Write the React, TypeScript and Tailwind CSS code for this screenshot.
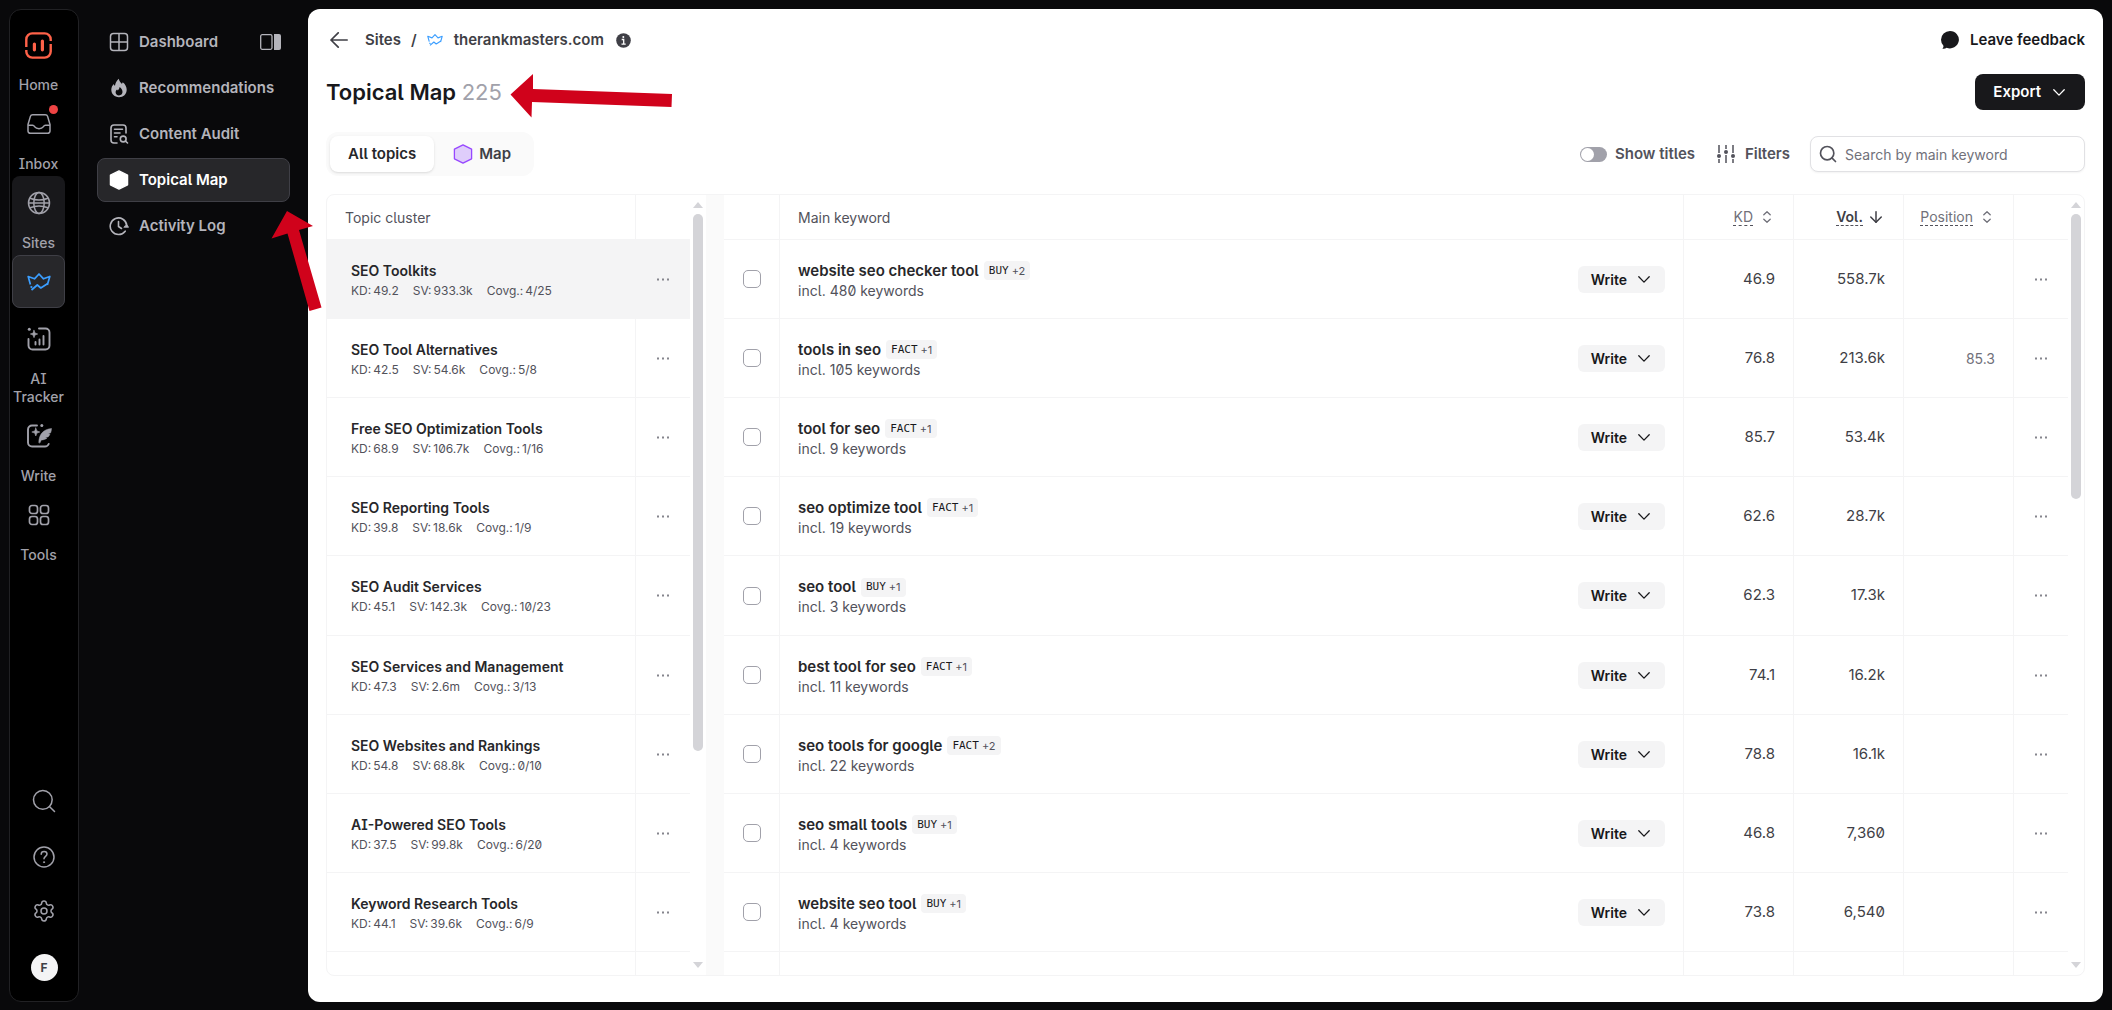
import type { ReactNode } from 'react';
import clsx from 'clsx';
import { ArrowDown, Search, Settings } from 'lucide-react';

interface Cluster {
  name: string;
  kd: string;
  sv: string;
  covg: string;
}

interface Keyword {
  name: string;
  tag: string;
  more: string;
  count: number;
  kd: string;
  vol: string;
  position?: string;
}

const clusters: Cluster[] = [
  { name: 'SEO Toolkits', kd: '49.2', sv: '933.3k', covg: '4/25' },
  { name: 'SEO Tool Alternatives', kd: '42.5', sv: '54.6k', covg: '5/8' },
  { name: 'Free SEO Optimization Tools', kd: '68.9', sv: '106.7k', covg: '1/16' },
  { name: 'SEO Reporting Tools', kd: '39.8', sv: '18.6k', covg: '1/9' },
  { name: 'SEO Audit Services', kd: '45.1', sv: '142.3k', covg: '10/23' },
  { name: 'SEO Services and Management', kd: '47.3', sv: '2.6m', covg: '3/13' },
  { name: 'SEO Websites and Rankings', kd: '54.8', sv: '68.8k', covg: '0/10' },
  { name: 'AI-Powered SEO Tools', kd: '37.5', sv: '99.8k', covg: '6/20' },
  { name: 'Keyword Research Tools', kd: '44.1', sv: '39.6k', covg: '6/9' },
];

const keywords: Keyword[] = [
  { name: 'website seo checker tool', tag: 'BUY', more: '+2', count: 480, kd: '46.9', vol: '558.7k' },
  { name: 'tools in seo', tag: 'FACT', more: '+1', count: 105, kd: '76.8', vol: '213.6k', position: '85.3' },
  { name: 'tool for seo', tag: 'FACT', more: '+1', count: 9, kd: '85.7', vol: '53.4k' },
  { name: 'seo optimize tool', tag: 'FACT', more: '+1', count: 19, kd: '62.6', vol: '28.7k' },
  { name: 'seo tool', tag: 'BUY', more: '+1', count: 3, kd: '62.3', vol: '17.3k' },
  { name: 'best tool for seo', tag: 'FACT', more: '+1', count: 11, kd: '74.1', vol: '16.2k' },
  { name: 'seo tools for google', tag: 'FACT', more: '+2', count: 22, kd: '78.8', vol: '16.1k' },
  { name: 'seo small tools', tag: 'BUY', more: '+1', count: 4, kd: '46.8', vol: '7,360' },
  { name: 'website seo tool', tag: 'BUY', more: '+1', count: 4, kd: '73.8', vol: '6,540' },
];

/* ---------- Icons ---------- */

function LogoIcon() {
  return (
    <svg className="size-[27px]" viewBox="0 0 27 27" fill="none" stroke="#ff6249" strokeWidth="2.4">
      <path d="M1.300 15V7.400a6 6 0 0 1 6-6h12.400a6 6 0 0 1 6 6V9" />
      <path d="M25.700 12v7.600a6 6 0 0 1-6 6H7.300a6 6 0 0 1-6-6V18" />
      <path d="M9.400 12v5.800M17.400 9v8.800" strokeWidth="3.200" strokeLinecap="round" />
    </svg>
  );
}

function InboxIcon() {
  return (
    <svg className="size-6" viewBox="0 0 24 24" fill="none" stroke="currentColor" strokeWidth="1.500" strokeLinejoin="round">
      <path d="M1 12.500 3.400 4.400A2.400 2.400 0 0 1 5.700 2.700h12.600a2.400 2.400 0 0 1 2.300 1.700L23 12.500V19a2.300 2.300 0 0 1-2.300 2.300H3.300A2.300 2.300 0 0 1 1 19z" />
      <path d="M1 13.300h4.600c1.300 0 1.600.7 2.200 1.600.8 1.200 2 1.800 4.200 1.800s3.400-.6 4.200-1.800c.6-.9.9-1.600 2.200-1.600H23" />
    </svg>
  );
}

function GlobeIcon() {
  return (
    <svg className="size-6" viewBox="0 0 24 24" fill="none" stroke="currentColor" strokeWidth="1.500">
      <circle cx="12" cy="12" r="10.500" />
      <ellipse cx="12" cy="12" rx="5.200" ry="10.500" />
      <path d="M3 7.200c5.500 2.200 12.500 2.200 18 0M3 16.800c5.500-2.200 12.500-2.200 18 0M1.500 12h21" />
    </svg>
  );
}

function CrownIcon({ className }: { className: string }) {
  return (
    <svg className={className} viewBox="0 0 24 18" fill="none" stroke="currentColor" strokeWidth="1.700" strokeLinejoin="round">
      <path d="M3.400 11.500 1.200 3.500l6.300 2.300L12 1l4.500 4.800 6.300-2.300-2.500 8.500" />
      <path d="M4.500 17 10.300 12l3.500 3 7-4.500" />
      <path d="M3.500 13.500 5.300 14.500" />
    </svg>
  );
}

function TrackerIcon() {
  return (
    <svg className="size-6" viewBox="0 0 24 24" fill="none" stroke="currentColor" strokeWidth="1.900" strokeLinecap="round">
      <path d="M12 1.500h6.500a4 4 0 0 1 4 4v13a4 4 0 0 1-4 4h-13a4 4 0 0 1-4-4V12" />
      <path d="M8.500 17.500v-2.500M12.500 17.500v-5M16.500 17.500V9" />
      <path d="M7 3.300 8 6l2.700 1L8 8 7 10.700 6 8 3.300 7 6 6z" fill="currentColor" strokeWidth=".6" />
      <circle cx="2.300" cy="2.300" r="1.500" fill="currentColor" stroke="none" />
    </svg>
  );
}

function QuillIcon() {
  return (
    <svg className="size-[26px]" viewBox="0 0 26 26" fill="none" stroke="currentColor" strokeWidth="1.900" strokeLinecap="round">
      <path d="M11 2.500H6a4 4 0 0 0-4 4v13a4 4 0 0 0 4 4h13a4 4 0 0 0 3.700-2.500" />
      <path d="M9.800 5l1.100 2.900 2.900 1.100-2.900 1.100L9.800 13l-1.100-2.900L5.800 9l2.900-1.100z" fill="currentColor" strokeWidth=".6" />
      <circle cx="15.800" cy="2.500" r="1.500" fill="currentColor" stroke="none" />
      <path d="M12.800 19.500c0-7.500 4-13.200 12.700-14-.1 1.800-.4 3.200-1 4.500l-2.500.6 1.900.7c-.5 1-1 1.900-1.800 2.600l-2.700.4 1.500.9c-1.600 1.200-3.400 1.700-5.600 1.800l-1.300 2.800z" fill="currentColor" strokeWidth=".5" />
    </svg>
  );
}

function ToolsIcon() {
  return (
    <svg className="size-[22px]" viewBox="0 0 22 22" fill="none" stroke="currentColor" strokeWidth="1.700">
      <rect x="1.500" y="1.500" width="8" height="8" rx="2.500" />
      <rect x="12.500" y="1.500" width="8" height="8" rx="2.500" />
      <rect x="1.500" y="12.500" width="8" height="8" rx="2.500" />
      <rect x="12.500" y="12.500" width="8" height="8" rx="2.500" />
    </svg>
  );
}

function HelpIcon() {
  return (
    <svg className="size-[22px]" viewBox="0 0 22 22" fill="none" stroke="currentColor" strokeWidth="1.500" strokeLinecap="round">
      <circle cx="11" cy="11" r="10" />
      <path d="M8.200 8.200c0-1.700 1.200-2.700 2.900-2.700s2.900 1 2.900 2.600c0 2.200-3 2.300-3 4.700" />
      <circle cx="11" cy="16.200" r=".6" fill="currentColor" strokeWidth=".8" />
    </svg>
  );
}

function DashboardIcon() {
  return (
    <svg className="size-5" viewBox="0 0 20 20" fill="none" stroke="currentColor" strokeWidth="1.500">
      <rect x="1.500" y="1.500" width="17" height="17" rx="3" />
      <path d="M10 1.500v17M1.500 10h17" />
    </svg>
  );
}

function FlameIcon() {
  return (
    <svg className="size-5" viewBox="0 0 20 20" fill="currentColor" fillRule="evenodd">
      <path d="M9.800.8c.6 2.600 1.700 3.700 2.900 5 .6-.4.8-.9 1-1.600 2.600 2 4 4.600 4 7.500 0 4.500-3.300 7.500-7.700 7.500s-7.700-3-7.700-7.400c0-2.500 1-4.300 2.600-5.900.2 1 .5 1.500 1.100 1.900C6.300 5 7.600 2.600 9.800.8zM10.600 9c-.2 1.900-1 2.600-1.700 3.400-.4-.2-.6-.5-.8-.9-1 .8-1.500 1.600-1.500 2.700 0 1.900 1.400 3.200 3.400 3.200s3.500-1.300 3.500-3.300C13.500 12 12.400 10.300 10.600 9z" />
    </svg>
  );
}

function AuditIcon() {
  return (
    <svg className="size-5" viewBox="0 0 20 20" fill="none" stroke="currentColor" strokeWidth="1.600" strokeLinecap="round">
      <path d="M8 19H5a3 3 0 0 1-3-3V4a3 3 0 0 1 3-3h9a3 3 0 0 1 3 3v5" />
      <path d="M5.500 5.300h8M5.500 9h5.500M5.500 12.700h2.500" />
      <circle cx="14.200" cy="15" r="2.900" />
      <path d="m16.500 17.200 2 1.800" />
    </svg>
  );
}

function HexagonIcon({ className }: { className: string }) {
  return (
    <svg className={className} viewBox="0 0 20 20" stroke="currentColor" strokeWidth="1.300" strokeLinejoin="round">
      <path d="M10 .9 18.600 5.200v9.600L10 19.100 1.400 14.800V5.200z" />
    </svg>
  );
}

function ActivityIcon() {
  return (
    <svg className="size-5" viewBox="0 0 20 20" fill="none" stroke="currentColor" strokeWidth="1.600" strokeLinecap="round" strokeLinejoin="round">
      <path d="M16.200 15.200A8.300 8.300 0 1 1 17.800 9.500" />
      <path d="M9.500 5.500v5l3 2" />
      <path d="M15.200 11.300 19.600 11.300 17.700 8.600z" fill="currentColor" strokeWidth=".8" />
    </svg>
  );
}

function PanelIcon() {
  return (
    <svg className="h-4 w-[21px]" viewBox="0 0 21 16" fill="none">
      <rect x=".7" y=".7" width="11.300" height="14.600" rx="1.500" stroke="currentColor" strokeWidth="1.300" />
      <path d="M14 0h5a2 2 0 0 1 2 2v12a2 2 0 0 1-2 2h-5z" fill="currentColor" />
    </svg>
  );
}

function BackIcon() {
  return (
    <svg className="h-4 w-[18px]" viewBox="0 0 18 16" fill="none" stroke="currentColor" strokeWidth="1.700" strokeLinecap="round" strokeLinejoin="round">
      <path d="M17.200 8H1M8.200.8 1 8l7.200 7.200" />
    </svg>
  );
}

function ChevronIcon() {
  return (
    <svg className="h-[7px] w-3" viewBox="0 0 12 7" fill="none" stroke="currentColor" strokeWidth="1.300" strokeLinecap="round" strokeLinejoin="round">
      <path d="M.8.800 6 6.100 11.200.8" />
    </svg>
  );
}

function InfoIcon() {
  return (
    <svg className="size-[15px] text-[#3f3f46]" viewBox="0 0 15 15">
      <circle cx="7.500" cy="7.500" r="7.300" fill="currentColor" />
      <path d="M5.700 6.500h2v4.300M5.500 11.100h4.200" stroke="#fff" strokeWidth="1.300" fill="none" />
      <circle cx="7.300" cy="4" r="1" fill="#fff" />
    </svg>
  );
}

function ChatIcon() {
  return (
    <svg className="size-[18px]" viewBox="0 0 18 18" fill="currentColor">
      <path d="M9 0a9 8.700 0 1 1-3.400 16.800c-1 .9-2.600 1.200-4.200.9 1-.9 1.300-1.900.9-3.100A8.800 8.800 0 0 1 0 8.800 9 8.800 0 0 1 9 0z" />
    </svg>
  );
}

function SlidersIcon() {
  return (
    <svg className="size-[18px]" viewBox="0 0 18 18" fill="none" stroke="currentColor" strokeWidth="1.500">
      <path d="M2 0v8M2 14v4M9 0v4M9 10v8M16 0v8M16 14v4" />
      <g fill="currentColor" stroke="none">
        <circle cx="2" cy="11" r="2" />
        <circle cx="9" cy="7" r="2" />
        <circle cx="16" cy="11" r="2" />
      </g>
    </svg>
  );
}

function SortIcon() {
  return (
    <svg className="h-3 w-2" viewBox="0 0 8 12" fill="none" stroke="currentColor" strokeWidth="1.300" strokeLinecap="round" strokeLinejoin="round">
      <path d="M.8 3.800 4 .8l3.200 3M.8 8.200l3.200 3 3.200-3" />
    </svg>
  );
}

function DotsIcon() {
  return (
    <svg className="h-[3px] w-3" viewBox="0 0 12 3" fill="#85858d">
      <rect x="0" y=".5" width="2" height="2" />
      <rect x="5" y=".5" width="2" height="2" />
      <rect x="10" y=".5" width="2" height="2" />
    </svg>
  );
}

/* ---------- Navigation ---------- */

function RailItem({ label, children }: { label: string; children: ReactNode }) {
  return (
    <a href="#" className="flex w-full flex-col items-center gap-1 pb-[3px] text-center text-[14px] leading-[18px] font-medium">
      <span className="flex h-[54px] items-center justify-center">{children}</span>
      <span className="w-full">{label}</span>
    </a>
  );
}

function Rail() {
  return (
    <nav className="flex w-[70px] shrink-0 flex-col rounded-xl border border-[#212124] bg-black text-[#a1a1aa]">
      <div className="flex w-[57px] flex-col items-center px-[2px] pt-2">
        <RailItem label="Home">
          <LogoIcon />
        </RailItem>
        <RailItem label="Inbox">
          <span className="relative">
            <InboxIcon />
            <span className="absolute -top-[7px] -right-[7px] size-[9px] rounded-full bg-[#ef4444]" />
          </span>
        </RailItem>
        <div className="w-full rounded-lg bg-[#18181b]">
          <RailItem label="Sites">
            <GlobeIcon />
          </RailItem>
          <a
            href="#"
            aria-label="therankmasters.com"
            className="flex h-[53px] items-center justify-center rounded-lg border border-[#3f3f46] bg-[#27272a] text-[#3b9eff]"
          >
            <CrownIcon className="h-[18px] w-6" />
          </a>
        </div>
        <div className="flex w-full flex-col pt-1">
          <RailItem label="AI Tracker">
            <TrackerIcon />
          </RailItem>
          <RailItem label="Write">
            <QuillIcon />
          </RailItem>
          <RailItem label="Tools">
            <ToolsIcon />
          </RailItem>
        </div>
      </div>

      <div className="mt-auto flex flex-col items-center gap-[31px] pb-5">
        <button aria-label="Search">
          <Search className="size-7" strokeWidth={1.3} />
        </button>
        <button aria-label="Help">
          <HelpIcon />
        </button>
        <button aria-label="Settings">
          <Settings className="size-6" strokeWidth={1.5} />
        </button>
        <button className="flex size-[27px] items-center justify-center rounded-full bg-[#f4f4f5] text-[12px] font-bold text-[#3f3f46]">
          F
        </button>
      </div>
    </nav>
  );
}

function MenuItem({ label, active, children }: { label: string; active?: boolean; children: ReactNode }) {
  return (
    <a
      href="#"
      className={clsx(
        'flex h-11 items-center gap-[10px] rounded-lg border px-[11px] whitespace-nowrap',
        active ? 'border-[#3f3f46] bg-[#27272a] text-white' : 'border-transparent text-[#b4b4bb]',
      )}
    >
      {children}
      {label}
    </a>
  );
}

function SideMenu() {
  return (
    <aside className="w-[229px] shrink-0 px-[18px] pt-[11px] text-[15px] font-semibold">
      <div className="flex flex-col gap-[2px]">
        <div className="flex items-center justify-between text-[#b4b4bb]">
          <MenuItem label="Dashboard">
            <DashboardIcon />
          </MenuItem>
          <button aria-label="Collapse menu" className="pr-[9px]">
            <PanelIcon />
          </button>
        </div>
        <MenuItem label="Recommendations">
          <FlameIcon />
        </MenuItem>
        <MenuItem label="Content Audit">
          <AuditIcon />
        </MenuItem>
        <MenuItem label="Topical Map" active>
          <HexagonIcon className="size-5 fill-white" />
        </MenuItem>
        <MenuItem label="Activity Log">
          <ActivityIcon />
        </MenuItem>
      </div>
    </aside>
  );
}

/* ---------- Main area ---------- */

function PageHeader() {
  return (
    <header>
      <div className="flex h-[62px] items-center justify-between text-[15px] font-semibold">
        <div className="flex items-center text-[#3f3f46]">
          <button aria-label="Back" className="mr-[17px] ml-1">
            <BackIcon />
          </button>
          <a href="#">Sites</a>
          <span className="mx-[10px]">/</span>
          <CrownIcon className="mr-[11px] h-3 w-4 text-[#3b9eff]" />
          <a href="#" className="mr-3">
            therankmasters.com
          </a>
          <InfoIcon />
        </div>
        <button className="flex items-center gap-[11px] text-[#18181b]">
          <ChatIcon />
          Leave feedback
        </button>
      </div>

      <div className="flex h-[42px] items-center justify-between">
        <h1 className="text-[22px] font-semibold text-[#18181b]">
          Topical Map <span className="font-normal text-[#a1a1aa]">225</span>
        </h1>
        <button className="flex h-9 items-center gap-3 rounded-lg bg-[#18181b] pr-5 pl-[18px] text-[15px] font-semibold text-white">
          Export
          <ChevronIcon />
        </button>
      </div>
    </header>
  );
}

function Toolbar() {
  return (
    <div className="mt-[19px] flex h-11 items-center justify-between text-[15px] font-semibold text-[#52525b]">
      <div className="flex h-11 items-center rounded-xl bg-[#fafafa] p-1">
        <button className="h-9 rounded-lg bg-white px-[18px] text-[#27272a] shadow-sm">All topics</button>
        <button className="flex h-9 items-center gap-[6px] px-[19px] text-[#3f3f46]">
          <HexagonIcon className="size-5 fill-[#dfcdfb] text-[#9747ff]" />
          Map
        </button>
      </div>
      <div className="flex items-center">
        <label className="flex items-center gap-2">
          <input
            type="checkbox"
            role="switch"
            className="h-[15px] w-[27px] appearance-none rounded-full bg-[#a1a1aa] p-[1px] before:block before:size-[13px] before:rounded-full before:bg-white"
          />
          Show titles
        </label>
        <button className="mr-5 ml-[22px] flex items-center gap-[10px]">
          <SlidersIcon />
          Filters
        </button>
        <label className="flex h-9 w-[275px] items-center gap-[7px] rounded-lg border border-[#e1e1e4] bg-white px-[7px] shadow-xs">
          <Search className="size-5 shrink-0" strokeWidth={2} />
          <input
            type="text"
            aria-label="Search by main keyword"
            placeholder="Search by main keyword"
            className="w-full min-w-0 text-[14px] font-normal outline-none placeholder:text-[#71717a]"
          />
        </label>
      </div>
    </div>
  );
}

function Scrollbar({ thumb }: { thumb: string }) {
  return (
    <div className="flex w-4 shrink-0 flex-col items-center py-[7px]">
      <span className="size-0 border-x-[5px] border-b-[6px] border-x-transparent border-b-[#d4d4d8]" />
      <div className="flex w-[10px] flex-1 flex-col py-[6px]">
        <div className={clsx('w-full rounded-full bg-[#d4d4d8]', thumb)} />
      </div>
      <span className="size-0 border-x-[5px] border-t-[6px] border-x-transparent border-t-[#d4d4d8]" />
    </div>
  );
}

function MoreButton() {
  return (
    <button aria-label="More actions" className="mx-auto flex size-6 items-center justify-center">
      <DotsIcon />
    </button>
  );
}

function Stat({ label, value }: { label: string; value: string }) {
  return (
    <span className="flex gap-[2px]">
      <span>{label}</span>
      <span>{value}</span>
    </span>
  );
}

function ClusterTable() {
  return (
    <div className="w-[363px] shrink-0 overflow-hidden">
      <table className="w-full table-fixed border-separate border-spacing-0 text-left">
        <colgroup>
          <col />
          <col className="w-[55px]" />
        </colgroup>
        <thead>
          <tr className="h-[45px]">
            <th className="border-b border-[#f4f4f5] pl-[18px] text-[14px] font-normal text-[#52525b]">Topic cluster</th>
            <th className="border-b border-l border-[#f4f4f5]" />
          </tr>
        </thead>
        <tbody>
          {clusters.map((c, i) => (
            <tr key={c.name} className={clsx('h-[79px] nth-[5n]:h-20', i === 0 && 'bg-[#f4f4f5]')}>
              <td className="border-b border-[#f4f4f5] pt-[3px] pl-6">
                <div className="text-[14px] leading-5 font-semibold text-[#27272a]">{c.name}</div>
                <div className="flex gap-[14px] text-[12px] leading-5 text-[#52525b]">
                  <Stat label="KD:" value={c.kd} />
                  <Stat label="SV:" value={c.sv} />
                  <Stat label="Covg.:" value={c.covg} />
                </div>
              </td>
              <td className="border-b border-l border-[#f4f4f5]">
                <MoreButton />
              </td>
            </tr>
          ))}
          <tr className="h-20">
            <td />
            <td className="border-l border-[#f4f4f5]" />
          </tr>
        </tbody>
      </table>
    </div>
  );
}

function KeywordTable() {
  const cell = 'border-b border-l border-[#f4f4f5]';

  return (
    <div className="min-w-0 flex-1 overflow-hidden">
      <table className="w-full table-fixed border-separate border-spacing-0 text-[15px] text-[#3f3f46]">
        <colgroup>
          <col className="w-[55px]" />
          <col />
          <col className="w-[110px]" />
          <col className="w-[110px]" />
          <col className="w-[110px]" />
          <col className="w-[55px]" />
        </colgroup>
        <thead className="text-[14px] text-[#52525b]">
          <tr className="h-[45px]">
            <th className="border-b border-[#f4f4f5]" />
            <th className={clsx(cell, 'pl-[18px] text-left font-normal')}>Main keyword</th>
            <th className={cell}>
              <button className="ml-auto flex items-center gap-[10px] pr-[22px] font-normal text-[#71717a]">
                <span className="border-b border-dashed border-[#52525b] leading-4">KD</span>
                <SortIcon />
              </button>
            </th>
            <th className={cell}>
              <button className="ml-auto flex items-center gap-1 pr-[18px] font-semibold text-[#3f3f46]">
                <span className="border-b border-dashed border-[#52525b] leading-4">Vol.</span>
                <ArrowDown className="size-[18px]" strokeWidth={2} />
              </button>
            </th>
            <th className={cell}>
              <button className="ml-auto flex items-center gap-[10px] pr-[22px] font-normal text-[#71717a]">
                <span className="border-b border-dashed border-[#52525b] leading-4">Position</span>
                <SortIcon />
              </button>
            </th>
            <th className={cell} />
          </tr>
        </thead>
        <tbody>
          {keywords.map((k) => (
            <tr key={k.name} className="h-[79px] nth-[5n]:h-20">
              <td className="border-b border-[#f4f4f5]">
                <input
                  type="checkbox"
                  aria-label={k.name}
                  className="mx-auto block size-[18px] appearance-none rounded-[5px] border border-[#a1a1aa] bg-white"
                />
              </td>
              <td className={clsx(cell, 'px-[18px]')}>
                <div className="flex items-center justify-between">
                  <div className="pt-[3px]">
                    <div className="flex items-center gap-[5px] leading-5">
                      <span className="font-semibold text-[#27272a]">{k.name}</span>
                      <span className="flex h-[19px] items-center gap-[3px] rounded bg-[#f4f4f5] px-[5px] text-[11px] text-[#52525b]">
                        <span className="font-['DejaVu_Sans_Mono',monospace] text-[#18181b]">{k.tag}</span>
                        {k.more}
                      </span>
                    </div>
                    <div className="text-[14px] leading-5 text-[#52525b]">incl. {k.count} keywords</div>
                  </div>
                  <button className="flex h-[27px] items-center gap-[11px] rounded-md bg-[#f4f4f5] pr-[15px] pl-[13px] text-[14px] font-semibold text-[#18181b]">
                    Write
                    <ChevronIcon />
                  </button>
                </div>
              </td>
              <td className={clsx(cell, 'pr-[18px] text-right')}>{k.kd}</td>
              <td className={clsx(cell, 'pr-[18px] text-right')}>{k.vol}</td>
              <td className={clsx(cell, 'pr-[18px] text-right text-[14px] text-[#71717a]')}>{k.position}</td>
              <td className={cell}>
                <MoreButton />
              </td>
            </tr>
          ))}
          <tr className="h-20">
            <td />
            <td className="border-l border-[#f4f4f5]" />
            <td className="border-l border-[#f4f4f5]" />
            <td className="border-l border-[#f4f4f5]" />
            <td className="border-l border-[#f4f4f5]" />
            <td className="border-l border-[#f4f4f5]" />
          </tr>
        </tbody>
      </table>
    </div>
  );
}

/* Hand-placed arrows pointing at the menu entry and the topic count */
function Annotations() {
  return (
    <svg className="pointer-events-none absolute top-0 left-0 h-[330px] w-[700px]" viewBox="0 0 700 330" fill="#d0021b">
      <path d="M510.500 94.500 533 74v15l139 5-.5 13-139.500-5-.5 15.500z" />
      <path d="m287 211 26 15-14 4 22.500 77.500-12 3.500-22-77.500-16 5z" />
    </svg>
  );
}

export default function App() {
  return (
    <div className="relative flex h-screen overflow-hidden bg-[#09090b] px-[9px] pt-[9px] pb-2 font-['Inter','Liberation_Sans',sans-serif] [font-feature-settings:'ss02','zero']">
      <Rail />
      <SideMenu />
      <main className="flex min-w-0 flex-1 flex-col rounded-xl bg-white px-[18px] pb-[26px]">
        <PageHeader />
        <Toolbar />
        <div className="mt-[18px] flex min-h-0 flex-1 overflow-hidden rounded-lg border border-[#f4f4f5]">
          <ClusterTable />
          <Scrollbar thumb="h-[537px]" />
          <div className="w-[18px] shrink-0 bg-[#fafafa]" />
          <KeywordTable />
          <Scrollbar thumb="h-[285px]" />
        </div>
      </main>
      <Annotations />
    </div>
  );
}
